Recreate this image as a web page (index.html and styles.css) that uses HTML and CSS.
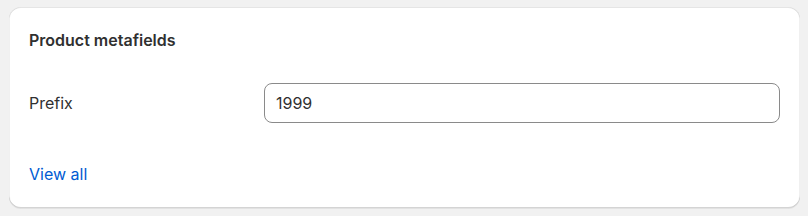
FILE: index.html
```html
<!DOCTYPE html>
<html lang="en">
<head>
    <meta charset="UTF-8">
    <title>Product metafields</title>
    <link rel="stylesheet" href="styles.css">
</head>
<body>
    <div class="card">
        <h2 class="card-title">Product metafields</h2>

        <div class="field-row">
            <label class="field-label" for="prefix">Prefix</label>
            <input class="field-input" id="prefix" type="text" value="1999">
        </div>

        <a class="view-all" href="#">View all</a>
    </div>
</body>
</html>
```

FILE: styles.css
```css
body {
    margin: 0;
    padding: 7px 8px 8px 9px;
    background-color: #f1f1f1;
    font-family: Inter, "Noto Sans", sans-serif;
    font-size: 16px;
    line-height: 24px;
    color: #303030;
}
.card {
    background-color: white;
    border-radius: 12px;
    padding: 21px 20px 22px;
    height: 201px;
    box-sizing: border-box;
    box-shadow: 0 1px 0 0 rgba(26,26,26,0.07),
        inset 0 -1px 0 0 rgba(0,0,0,0.17),
        inset 1px 0 0 0 rgba(0,0,0,0.06),
        inset -1px 0 0 0 rgba(0,0,0,0.06),
        inset 0 1px 0 0 rgba(204,204,204,0.5);
    display: flex;
    flex-direction: column;
}
.card-title {
    margin: 0;
    font-size: 16px;
    font-weight: 600;
    line-height: 24px;
}
.field-row {
    display: grid;
    grid-template-columns: 235px 1fr;
    align-items: center;
    margin-top: 31px;
}
.field-label {
    font-size: 16px;
}
.field-input {
    height: 40px;
    box-sizing: border-box;
    border: 1px solid #8a8a8a;
    border-radius: 8px;
    padding: 0 11px;
    font-family: inherit;
    font-size: 16px;
    color: #303030;
    outline: none;
}
.view-all {
    margin-top: 39px;
    align-self: flex-start;
    color: #005bd3;
    text-decoration: none;
    font-size: 16px;
}
```
